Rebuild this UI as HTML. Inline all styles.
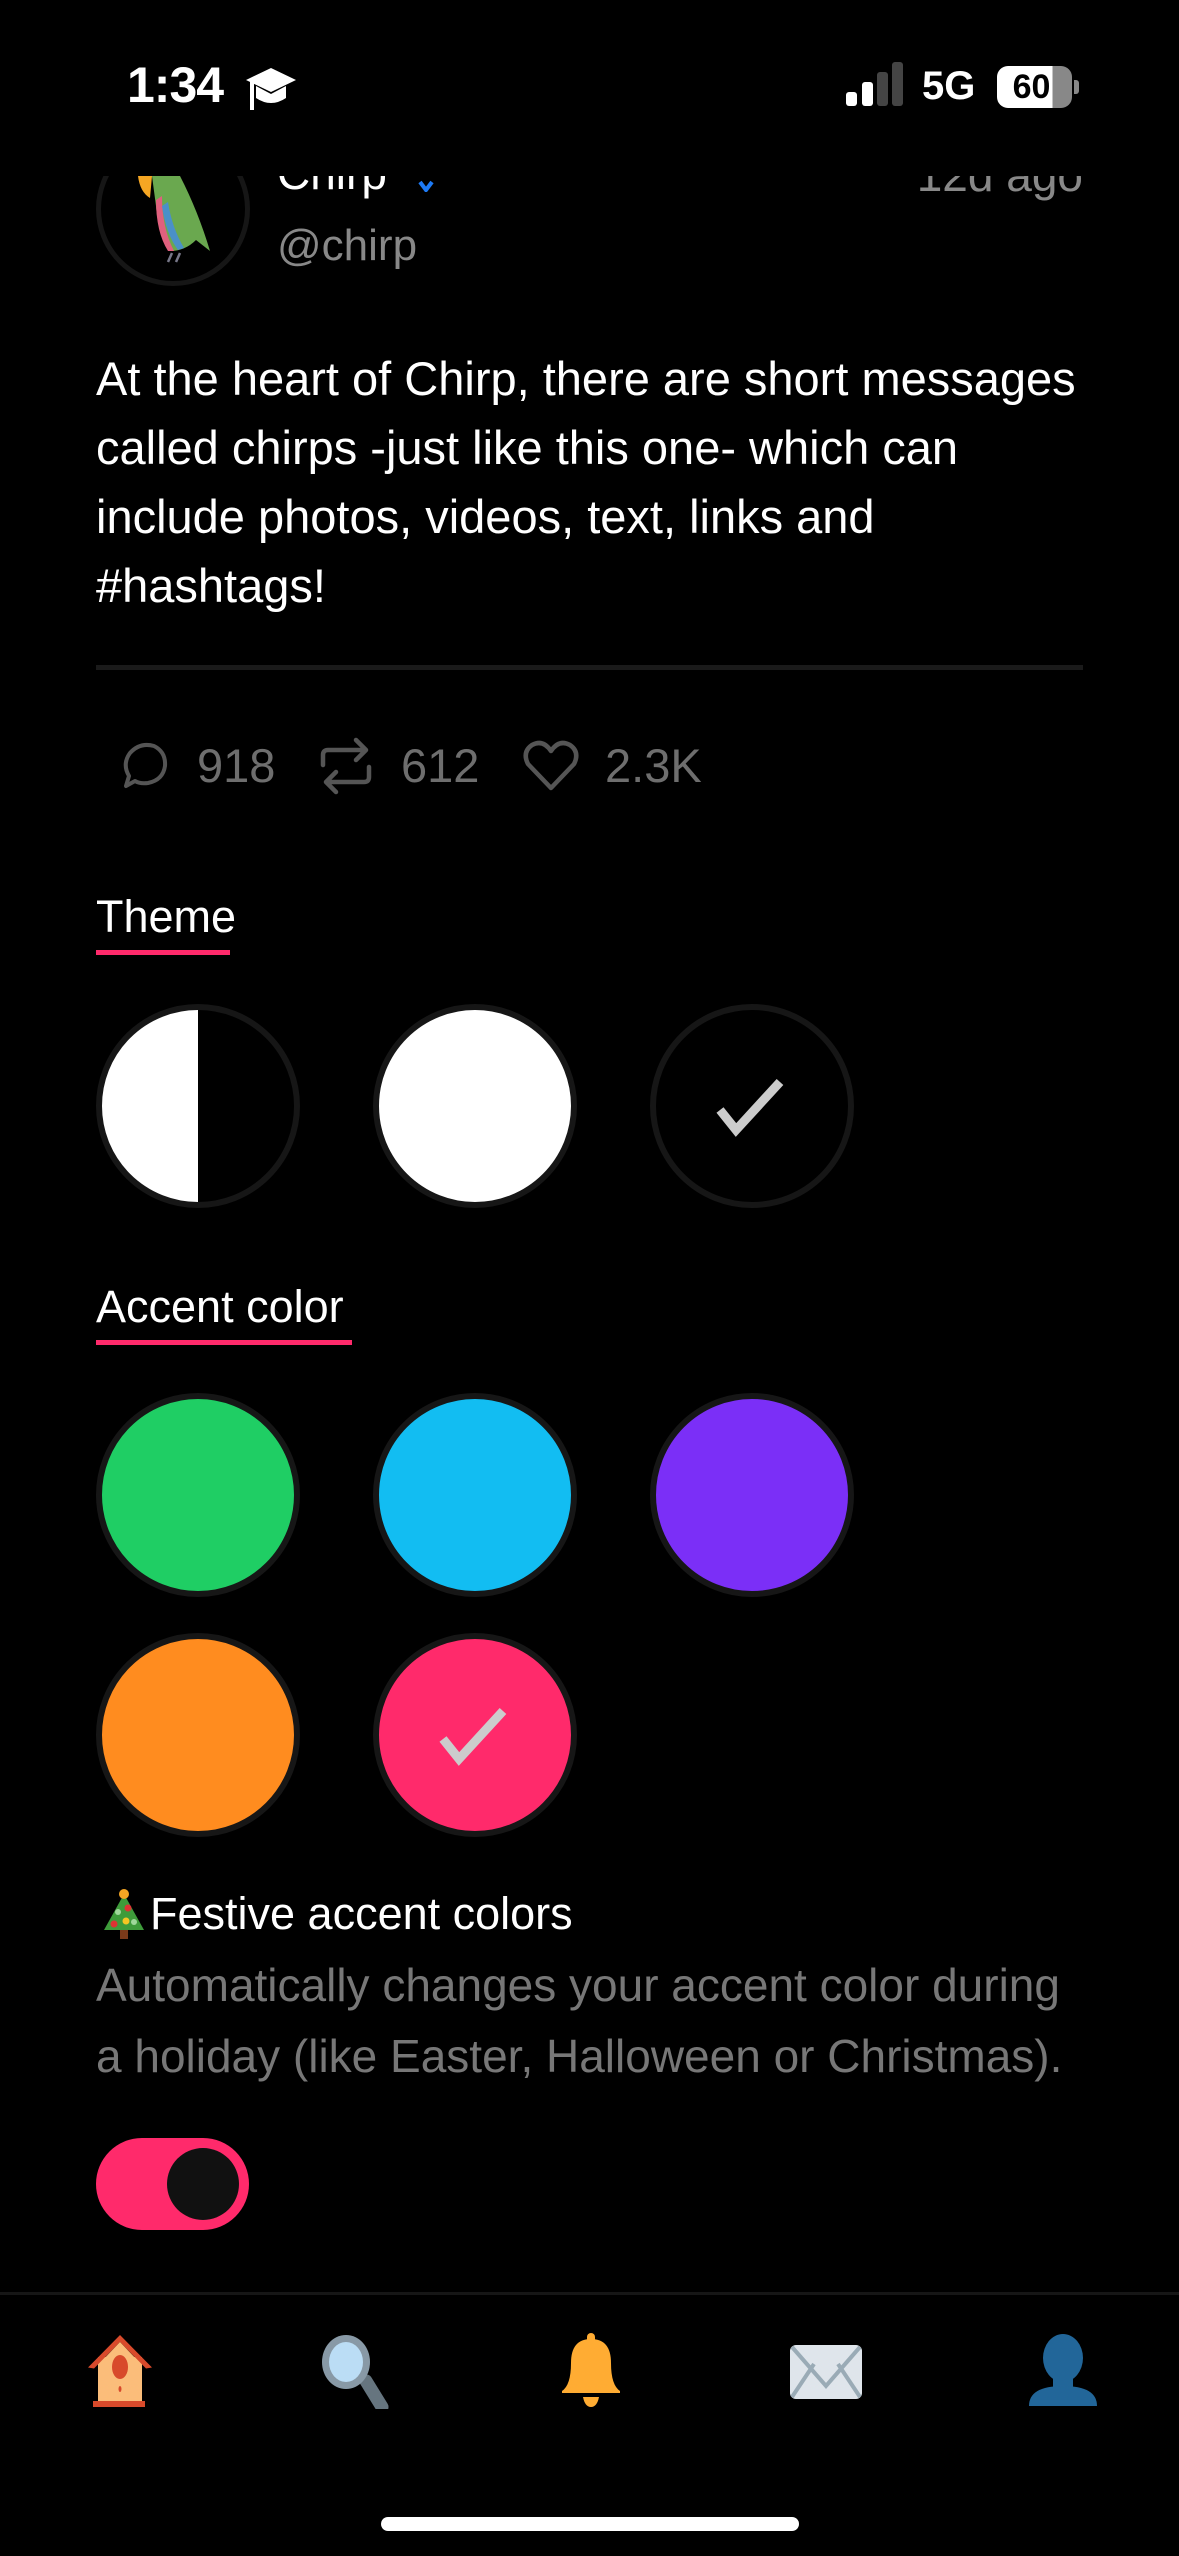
<!DOCTYPE html>
<html><head><meta charset="utf-8"><style>
*{margin:0;padding:0;box-sizing:border-box}
body{width:1179px;height:2556px;background:#000;position:relative;overflow:hidden;font-family:"Liberation Sans","DejaVu Sans",sans-serif;color:#fff}
.a{position:absolute;white-space:nowrap}
.c{position:absolute;width:204px;height:204px;border-radius:50%;border:6px solid #161616}
.ul{position:absolute;height:5px;background:#ff2a6b}
.g{color:#777}
</style></head><body>

<!-- post header (clipped) -->
<div class="a" style="left:0;top:176px;width:1179px;height:120px;overflow:hidden">
  <div style="position:absolute;left:96px;top:-44px;width:154px;height:154px;border-radius:50%;border:5px solid #161616"></div>
  <svg style="position:absolute;left:130px;top:0" width="92" height="90" viewBox="0 0 92 90">
    <path d="M22 0 L50 0 Q68 35 80 75 L66 64 Q55 75 40 75 Q28 58 26 30Z" fill="#6aa84f"/>
    <path d="M26 24 Q26 56 38 75 L44 75 Q32 52 32 20Z" fill="#e0607e"/>
    <path d="M32 30 Q36 58 48 74 L54 72 Q42 52 38 26Z" fill="#4a90c8"/>
    <path d="M8 0 L22 0 L20 22 Q10 16 8 0Z" fill="#f5a623"/>
    <path d="M42 77 l-4 9 M50 77 l-4 9" stroke="#778" stroke-width="2.5"/>
  </svg>
  <div class="a" style="left:277px;top:-30px;font-size:46px">Chirp</div>
  <svg class="a" style="left:418px;top:4px" width="16" height="12"><path d="M2 2 L8 10 L14 2" fill="none" stroke="#1d7af5" stroke-width="4"/></svg>
  <div class="a g" style="right:96px;top:-28px;font-size:46px;color:#888">12d ago</div>
  <div class="a" style="left:277px;top:45px;font-size:44px;color:#888">@chirp</div>
</div>

<!-- status bar -->
<div class="a" style="left:127px;top:56px;font-size:50px;font-weight:bold;letter-spacing:-1px">1:34</div>
<svg class="a" style="left:244px;top:66px" width="54" height="52" viewBox="0 0 54 52"><path d="M27 2 L52 14 L27 26 L2 14Z" fill="#fff"/><path d="M12 20 L12 32 Q27 42 42 32 L42 20 L27 28Z" fill="#fff"/><path d="M8 16 L8 44" stroke="#fff" stroke-width="4"/></svg>
<div class="a" style="left:846px;top:92px;width:11px;height:14px;background:#fff;border-radius:3px"></div>
<div class="a" style="left:862px;top:82px;width:11px;height:24px;background:#fff;border-radius:3px"></div>
<div class="a" style="left:877px;top:72px;width:11px;height:34px;background:#444;border-radius:3px"></div>
<div class="a" style="left:892px;top:62px;width:11px;height:44px;background:#444;border-radius:3px"></div>
<div class="a" style="left:922px;top:64px;font-size:40px;font-weight:bold">5G</div>
<div class="a" style="left:997px;top:66px;width:75px;height:42px;border-radius:11px;background:linear-gradient(90deg,#fff 0,#fff 74%,#888 74%);color:#000;font-weight:bold;font-size:34px;text-align:center;line-height:42px;padding-right:6px">60</div>
<div class="a" style="left:1074px;top:80px;width:5px;height:14px;background:#888;border-radius:0 3px 3px 0"></div>

<!-- body text -->
<div class="a" style="left:96px;top:344px;font-size:47px;line-height:69px;white-space:normal;width:1060px">At the heart of Chirp, there are short messages<br>called chirps -just like this one- which can<br>include photos, videos, text, links and<br>#hashtags!</div>
<div class="a" style="left:96px;top:665px;width:987px;height:5px;background:#1a1a1a"></div>

<!-- stats -->
<svg class="a" style="left:118px;top:740px" width="52" height="52" viewBox="0 0 52 52"><path d="M8 46 L11 36 Q4 24 12 13 Q22 2 36 6 Q48 12 47 26 Q45 40 30 43 Q22 44 17 41 Z" fill="none" stroke="#555" stroke-width="4" stroke-linejoin="round"/></svg>
<div class="a" style="left:197px;top:738px;font-size:47px;color:#6e6e6e">918</div>
<svg class="a" style="left:318px;top:737px" width="56" height="58" viewBox="0 0 56 58"><path d="M5 28 L5 18 Q5 13 10 13 L48 13 M38 3 L48 13 L38 23 M51 30 L51 40 Q51 45 46 45 L8 45 M18 35 L8 45 L18 55" fill="none" stroke="#555" stroke-width="4.5" stroke-linecap="round" stroke-linejoin="round"/></svg>
<div class="a" style="left:401px;top:738px;font-size:47px;color:#6e6e6e">612</div>
<svg class="a" style="left:522px;top:740px" width="58" height="52" viewBox="0 0 58 52"><path d="M29 48 L6 24 Q0 12 10 5 Q21 -1 29 11 Q37 -1 48 5 Q58 12 52 24 Z" fill="none" stroke="#555" stroke-width="4.5" stroke-linejoin="round"/></svg>
<div class="a" style="left:605px;top:738px;font-size:47px;color:#6e6e6e">2.3K</div>

<!-- theme -->
<div class="a" style="left:96px;top:891px;font-size:45px">Theme</div>
<div class="ul" style="left:96px;top:950px;width:134px"></div>
<div class="c" style="left:96px;top:1004px;background:linear-gradient(90deg,#fff 50%,#000 50%)"></div>
<div class="c" style="left:373px;top:1004px;background:#fff"></div>
<div class="c" style="left:650px;top:1004px;background:#000"></div>
<svg class="a" style="left:712px;top:1074px" width="80" height="64"><path d="M8 36 L24 56 L68 8" fill="none" stroke="#ccc" stroke-width="9"/></svg>

<!-- accent -->
<div class="a" style="left:96px;top:1281px;font-size:45px">Accent color</div>
<div class="ul" style="left:96px;top:1340px;width:256px"></div>
<div class="c" style="left:96px;top:1393px;background:#1fce64"></div>
<div class="c" style="left:373px;top:1393px;background:#12bdf2"></div>
<div class="c" style="left:650px;top:1393px;background:#7b2ff7"></div>
<div class="c" style="left:96px;top:1633px;background:#ff8c1f"></div>
<div class="c" style="left:373px;top:1633px;background:#ff2a6b"></div>
<svg class="a" style="left:435px;top:1703px" width="80" height="64"><path d="M8 36 L24 56 L68 8" fill="none" stroke="#ccc" stroke-width="9"/></svg>

<!-- festive -->
<svg class="a" style="left:102px;top:1888px" width="44" height="52" viewBox="0 0 44 52"><path d="M22 6 L42 42 L2 42Z" fill="#3e9b3a"/><rect x="18" y="42" width="8" height="9" fill="#7a3a1a"/><circle cx="22" cy="6" r="5" fill="#f5a623"/><circle cx="26" cy="20" r="3.5" fill="#dd3333"/><circle cx="12" cy="36" r="3.5" fill="#dd3333"/><circle cx="24" cy="33" r="3.5" fill="#f5c623"/><circle cx="16" cy="24" r="3" fill="#9fd89a"/><circle cx="32" cy="34" r="3" fill="#9fd89a"/></svg>
<div class="a" style="left:150px;top:1888px;font-size:45px">Festive accent colors</div>
<div class="a" style="left:96px;top:1950px;font-size:46px;line-height:71px;color:#777">Automatically changes your accent color during<br>a holiday (like Easter, Halloween or Christmas).</div>
<div class="a" style="left:96px;top:2138px;width:153px;height:92px;border-radius:46px;background:#ff2a6b"></div>
<div class="a" style="left:167px;top:2148px;width:72px;height:72px;border-radius:50%;background:#111"></div>

<!-- nav -->
<div class="a" style="left:0;top:2292px;width:1179px;height:3px;background:#161616"></div>
<svg class="a" style="left:88px;top:2335px" width="64" height="72" viewBox="0 0 64 72"><path d="M32 0 L64 70 L57 70 L32 10 L7 70 L0 70Z" fill="none"/><rect x="10" y="22" width="44" height="46" fill="#fbbd7a"/><path d="M32 8 L54 46 L54 22 Q40 10 32 8Z" fill="#000" opacity="0"/><path d="M32 0 L63 70 M32 0 L1 70" stroke="none"/><path d="M32 0 L64 74 L58 76 L32 16 L6 76 L0 74Z" fill="#d84a2b" transform="scale(1,0.44)"/><path d="M32 7 L10 30 L10 68 L54 68 L54 30Z" fill="#fbbd7a"/><ellipse cx="32" cy="32" rx="8" ry="12" fill="#d84a2b"/><ellipse cx="32" cy="54" rx="1.5" ry="3" fill="#d84a2b"/><rect x="5" y="66" width="52" height="6" fill="#d84a2b"/></svg>
<svg class="a" style="left:320px;top:2335px" width="72" height="74" viewBox="0 0 72 74"><path d="M46 46 L62 72" stroke="#66757f" stroke-width="13" stroke-linecap="round"/><ellipse cx="26" cy="27" rx="24" ry="27" fill="#8899a6"/><ellipse cx="26" cy="27" rx="17" ry="20" fill="#bbddf5"/></svg>
<svg class="a" style="left:560px;top:2333px" width="62" height="74" viewBox="0 0 62 74"><rect x="27" y="0" width="8" height="12" rx="4" fill="#ffac33"/><path d="M31 6 Q11 6 11 30 Q11 52 2 58 L2 60 L60 60 L60 58 Q51 52 51 30 Q51 6 31 6Z" fill="#ffac33"/><path d="M23 64 L39 64 Q37 74 31 74 Q25 74 23 64Z" fill="#ffac33"/></svg>
<svg class="a" style="left:789px;top:2344px" width="74" height="56" viewBox="0 0 74 56"><rect x="1" y="1" width="72" height="54" rx="6" fill="#dfe5eb"/><path d="M3 3 L37 42 L71 3 M3 53 L25 20 M71 53 L49 20" fill="none" stroke="#9aabb6" stroke-width="4"/></svg>
<svg class="a" style="left:1027px;top:2334px" width="72" height="72" viewBox="0 0 72 72"><ellipse cx="36" cy="24" rx="20" ry="24" fill="#226699"/><rect x="26" y="40" width="20" height="16" fill="#226699"/><path d="M2 72 Q2 52 36 52 Q70 52 70 72Z" fill="#226699"/></svg>
<div class="a" style="left:381px;top:2517px;width:418px;height:14px;border-radius:7px;background:#fff"></div>
</body></html>
